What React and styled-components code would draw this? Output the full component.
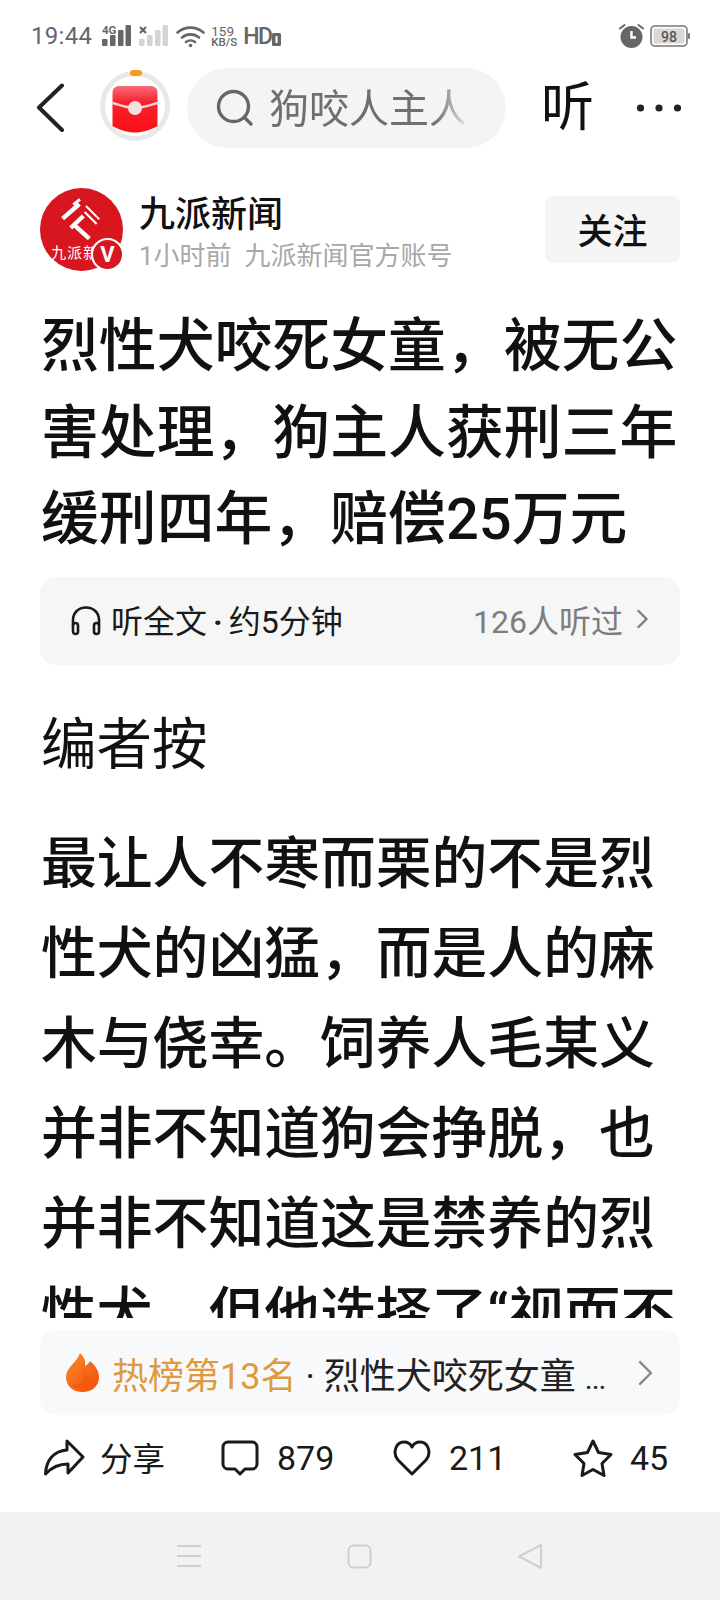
import React from "react";
import styled, { createGlobalStyle } from "styled-components";

const Global = createGlobalStyle`
  html, body { margin: 0; padding: 0; background: #fff; }
  * { box-sizing: border-box; }
  body { font-family: Roboto, "Noto Sans CJK SC", sans-serif; }
`;
const Screen = styled.div`
  width: 720px; height: 1600px; display: flex; flex-direction: column; overflow: hidden; background: #fff;
  font-family: Roboto, "Noto Sans CJK SC", sans-serif; color: #111;
`;
const StatusBar = styled.div`
  height: 68px; flex: none; display: flex; align-items: center; padding: 4px 30px 0 31px; color: #666; gap: 7px;
`;
const Clock = styled.span`font-size: 24px; letter-spacing: .3px; margin-right: 3px; color: #666;`;
const Speed = styled.span`
  display: flex; flex-direction: column; margin-left: -1px; width: 27px; font-weight: 500; white-space: nowrap;
`;
const SpeedValue = styled.span`font-size: 13.5px; line-height: 12px; font-weight: 400;`;
const SpeedUnit = styled.span`font-size: 11.5px; line-height: 11px;`;
const HD = styled.span`font-size: 23px; font-weight: 500; margin-left: -2px; letter-spacing: -1.5px;`;
const Spacer = styled.div`flex: 1;`;
const Toolbar = styled.div`
  height: 80px; flex: none; display: flex; align-items: center; padding-left: 36px;
`;
const PacketSlot = styled.div`margin-left: 33px; margin-top: -6px; flex: none; height: 72px;`;
const Pill = styled.div`
  width: 319px; height: 80px; margin-left: 16px; border-radius: 40px; background: #f3f4f6; display: flex; align-items: center; padding-left: 28px; gap: 14px;
`;
const PillText = styled.span`
  font-size: 40px; color: #6f6f6f; width: 195px; white-space: nowrap; overflow: hidden; margin-top: -5px;
  -webkit-mask-image: linear-gradient(90deg, #000 85%, rgba(0,0,0,.2));
  mask-image: linear-gradient(90deg, #000 85%, rgba(0,0,0,.2));
`;
const Listen = styled.span`font-size: 53px; color: #111; margin-left: 35px; line-height: 1;`;
const Author = styled.div`
  flex: none; display: flex; align-items: center; padding: 46px 40px 0; height: 124px;
`;
const Avatar = styled.div`
  width: 83px; height: 83px; position: relative; flex: none; border-radius: 50%; background: #d8161f; margin-top: -8px;
`;
const AvatarLabel = styled.span`
  position: absolute; left: 11px; top: 52px; width: 56px; overflow: hidden; white-space: nowrap; color: #fff; font-size: 15px; letter-spacing: 1px; line-height: 24px; font-family: "Noto Sans CJK SC", sans-serif;
`;
const Badge = styled.span`
  position: absolute; right: -1px; bottom: 0; width: 33px; height: 33px; border-radius: 50%; background: #d8161f; border: 2px solid #fff; color: #fff;
  display: flex; align-items: center; justify-content: center; font-size: 22px; font-weight: 700; font-family: Roboto, sans-serif;
`;
const AuthorInfo = styled.div`flex: 1; margin-left: 16px; display: flex; flex-direction: column; margin-top: -1px;`;
const AuthorName = styled.div`font-size: 36px; font-weight: 500; line-height: 46px; color: #111;`;
const AuthorMeta = styled.div`font-size: 26px; color: #a8a8a8; line-height: 36px; white-space: pre;`;
const Follow = styled.div`
  width: 135px; height: 67px; border-radius: 8px; background: #f5f5f5; font-size: 35px; font-weight: 500; display: flex; align-items: center; justify-content: center; margin-top: -8px; color: #111;
  padding-bottom: 2px;
`;
const Title = styled.h1`
  margin: 31px 0 0; padding: 0 36px 0 41px; flex: none; font-size: 57.85px; line-height: 86.5px; font-weight: 500; color: #111;
`;
const ListenBar = styled.div`
  flex: none; margin: 14px 40px 0; height: 88px; border-radius: 16px; background: #f6f6f6; display: flex; align-items: center; padding: 0 32px 3px 30px; gap: 9px;
  font-size: 32px; color: #1a1a1a;
`;
const ListenDot = styled.span`font-weight: 700; margin: 0 6px;`;
const ListenCount = styled.span`margin-left: auto; color: #7d7d7d; display: flex; align-items: center; gap: 14px;`;
const Article = styled.div`
  flex: 1; min-height: 0; overflow: hidden; padding: 41px 38px 0 41px;
`;
const Heading = styled.div`font-size: 55.5px; line-height: 80px; color: #111;`;
const Body = styled.p`
  margin: 33px 0 0; font-size: 55.8px; line-height: 90px; font-weight: 500; color: #111; width: 640px;
`;
const HotBar = styled.div`
  flex: none; margin: 12px 40px 0; height: 85px; border-radius: 16px; background: #f8f9fb; display: flex; align-items: center; padding: 0 27px 0 26px;
  font-size: 36px; white-space: nowrap;
`;
const HotRank = styled.span`color: #dd9a3f; margin-left: 13px;`;
const HotText = styled.span`flex: 1; color: #222; margin-left: 9px;`;
const HotEllipsis = styled.span`font-size: 30px; letter-spacing: -1px;`;
const Actions = styled.div`
  flex: none; height: 97px; display: flex; align-items: center; padding: 0 0 12px 43px; font-size: 34px; color: #1a1a1a;
`;
const Action = styled.div`
  display: flex; align-items: center; gap: ${p => p.$gap}px; width: ${p => p.$w}px;
`;
const ShareLabel = styled.span`font-size: 32.5px; margin-top: -3px;`;
const NavBar = styled.div`
  flex: none; height: 88px; background: #f1f2f4; display: flex; align-items: center; justify-content: space-between; padding: 0 177px 0 176px;
`;

const Back = () => (
  <svg width="30" height="50" viewBox="0 0 30 50"><path d="M26 2.5 3 24.5 26 47" fill="none" stroke="#222" strokeWidth="4" strokeLinecap="round" strokeLinejoin="round" /></svg>
);
const Packet = () => (
  <svg width="72" height="72" viewBox="0 0 72 72" style={{ flex: "none" }}>
    <defs>
      <linearGradient id="pk" x1="0" y1="0" x2="0" y2="1"><stop offset="0" stopColor="#fa6b78" /><stop offset=".35" stopColor="#f5222f" /><stop offset="1" stopColor="#fb0f12" /></linearGradient>
    </defs>
    <circle cx="36" cy="37" r="32.5" fill="#fff" stroke="#e8e8e8" strokeWidth="5" />
    <rect x="31" y="1" width="12" height="6" rx="3" fill="#f59a23" />
    <path d="M13.500 24c0-5 3-7 7-7h31c4 0 7 2 7 7v33c-7 4-15 6.500-22.500 6.500S20.500 61 13.500 57z" fill="url(#pk)" />
    <path d="M13.500 34c7 2 14 5 22.500 5s15.500-3 22.500-5" fill="none" stroke="#fbd3d3" strokeWidth="2.4" />
    <circle cx="36" cy="39" r="7" fill="#f6dfe0" />
  </svg>
);
const Search = () => (
  <svg width="40" height="40" viewBox="0 0 40 40" style={{ flex: "none" }}><circle cx="18.5" cy="18.5" r="15" fill="none" stroke="#666" strokeWidth="3.4" /><path d="M29.5 29.5 36 36" stroke="#666" strokeWidth="3.4" strokeLinecap="round" /></svg>
);
const Dots = () => (
  <svg width="46" height="10" viewBox="0 0 46 10" style={{ marginLeft: 42 }}><circle cx="4.5" cy="5" r="3.6" fill="#222" /><circle cx="23" cy="5" r="3.6" fill="#222" /><circle cx="41.5" cy="5" r="3.6" fill="#222" /></svg>
);
const Signal = ({ dim, mark }) => (
  <svg width="30" height="24" viewBox="0 0 30 24" fill={dim ? "#d4d4d4" : "#666"}>
    <rect x="0" y="15" width="5.500" height="7" rx="1" /><rect x="8" y="11" width="5.500" height="11" rx="1" /><rect x="16" y="6" width="5.500" height="16" rx="1" /><rect x="23.500" y="1" width="5.500" height="21" rx="1" />
    {mark === "x" && <path d="M1 3 7 9M7 3 1 9" stroke="#666" strokeWidth="2.2" />}
    {mark === "4g" && <text x="0" y="10" fontSize="11.5" fontWeight="700" fill="#666" fontFamily="Roboto">4G</text>}
  </svg>
);
const Wifi = () => (
  <svg width="29" height="23" viewBox="0 0 29 23" fill="none" stroke="#666" strokeWidth="2.6" strokeLinecap="round">
    <path d="M1.5 7.5C9 1 20 1 27.5 7.5" /><path d="M6 12.5c5-4.2 12-4.2 17 0" /><path d="M10 17c2.6-2 6.4-2 9 0" /><circle cx="14.5" cy="20.500" r="1.800" fill="#666" stroke="none" />
  </svg>
);
const Sim = () => (
  <svg width="9" height="13" viewBox="0 0 9 13" style={{ marginLeft: -7, marginTop: 6 }}><rect width="9" height="13" rx="1.500" fill="#666" /><rect x="3.500" y="3" width="2" height="7" fill="#fff" /></svg>
);
const Alarm = () => (
  <svg width="25" height="26" viewBox="0 0 25 26" style={{ marginRight: -1 }}>
    <circle cx="12.5" cy="14" r="11" fill="#666" /><path d="M12.5 8v6.5H17" fill="none" stroke="#fff" strokeWidth="2.4" />
    <path d="M1 5.5 5.5 2M24 5.5 19.5 2" stroke="#666" strokeWidth="2" strokeLinecap="round" />
  </svg>
);
const Battery = () => (
  <svg width="40" height="22" viewBox="0 0 40 22">
    <rect x="1" y="1" width="36" height="20" rx="4" fill="none" stroke="#777" strokeWidth="1.6" />
    <rect x="3.5" y="3.5" width="31" height="15" rx="2" fill="#d8d8d8" />
    <rect x="38" y="8" width="2" height="6" rx="1" fill="#777" />
    <text x="19" y="16.5" fontSize="14" textAnchor="middle" fontWeight="500" fill="#555" fontFamily="Roboto">98</text>
  </svg>
);
const Logo = styled.svg`position: absolute; left: -4px; top: -4px;`;
const AvatarLogo = () => (
  <Logo width="90" height="90" viewBox="0 0 270 270" fill="none" stroke="#fff" strokeLinecap="butt">
    <path d="M80 104 130 60" strokeWidth="13" />
    <path d="M112 62 132 46" strokeWidth="9" />
    <path d="M104 132 142 96" strokeWidth="13" />
    <path d="M150 66 190 106" strokeWidth="6" />
    <path d="M146 84 182 120" strokeWidth="6" />
    <path d="M116 124 160 164" strokeWidth="13" />
  </Logo>
);
const Headphones = () => (
  <svg width="32" height="32" viewBox="0 0 32 32" fill="none" stroke="#1a1a1a" strokeWidth="2.6" strokeLinecap="round" style={{ flex: "none", marginTop: 3 }}>
    <path d="M3 20v-5C3 7.5 8.5 2.5 16 2.5S29 7.5 29 15v5" />
    <rect x="3" y="18" width="5" height="11" rx="2.5" /><rect x="24" y="18" width="5" height="11" rx="2.5" />
  </svg>
);
const Chev = ({ w = 11, h = 20, c = "#7d7d7d", sw = 2.4 }) => (
  <svg width={w} height={h} viewBox="0 0 11 20"><path d="M1.5 2 9.5 10 1.5 18" fill="none" stroke={c} strokeWidth={sw} strokeLinecap="round" strokeLinejoin="round" /></svg>
);
const Flame = () => (
  <svg width="33" height="39" viewBox="0 0 33 39" style={{ flex: "none" }}>
    <defs><linearGradient id="fl" x1="0" y1="0" x2="1" y2="1"><stop offset="0" stopColor="#fb8a2e" /><stop offset="1" stopColor="#f34d05" /></linearGradient></defs>
    <path d="M14 0c4 4 6 8 5 13 2-1 4-3 5-5 5 4 9 10 9 16 0 9-7 15-16.500 15S0 33 0 24C0 14 11 10 14 0z" fill="url(#fl)" />
    <path d="M18 19c1 4 6 5 6 11 0 4-3 7-8 7-4 0-8-2-10-6 5 2 12 0 12-12z" fill="#f25a10" />
  </svg>
);
const Share = () => (
  <svg width="42" height="38" viewBox="0 0 42 38" fill="none" stroke="#1a1a1a" strokeWidth="3" strokeLinejoin="round" strokeLinecap="round" style={{ flex: "none" }}>
    <path d="M24 2 40 18 25 34V25C14 25 8 29 2.500 35 3 22 10 12 24 11z" />
  </svg>
);
const Comment = () => (
  <svg width="38" height="36" viewBox="0 0 38 36" fill="none" stroke="#1a1a1a" strokeWidth="3" strokeLinejoin="round" style={{ flex: "none" }}>
    <path d="M7 2h24a5 5 0 0 1 5 5v17a5 5 0 0 1-5 5h-7l-5 5-5-5H7a5 5 0 0 1-5-5V7a5 5 0 0 1 5-5z" />
  </svg>
);
const Heart = () => (
  <svg width="38" height="36" viewBox="0 0 38 36" fill="none" stroke="#1a1a1a" strokeWidth="3" strokeLinejoin="round" style={{ flex: "none" }}>
    <path d="M19 34 5 20C-1 13 3 2 11 2c4 0 6.500 2 8 5 1.500-3 4-5 8-5 8 0 12 11 6 18z" />
  </svg>
);
const Star = () => (
  <svg width="40" height="38" viewBox="0 0 40 38" fill="none" stroke="#1a1a1a" strokeWidth="3" strokeLinejoin="round" style={{ flex: "none" }}>
    <path d="M20 2 25.500 13.500 38 15.500 29 24.500 31 36.500 20 30.500 9 36.500 11 24.500 2 15.500 14.500 13.500z" />
  </svg>
);
const NavMenu = () => (
  <svg width="26" height="24" viewBox="0 0 26 24" fill="none" stroke="#cfcfcf" strokeWidth="2"><path d="M1 2h24M1 12h24M1 22h24" /></svg>
);
const NavHome = () => (
  <svg width="25" height="25" viewBox="0 0 25 25" fill="none" stroke="#cfcfcf" strokeWidth="2"><rect x="1.500" y="1.500" width="22" height="22" rx="5" /></svg>
);
const NavBack = () => (
  <svg width="26" height="27" viewBox="0 0 26 27" fill="none" stroke="#cfcfcf" strokeWidth="2" strokeLinejoin="round"><path d="M24 2 2 13.500 24 25z" /></svg>
);

export default function App() {
  return (
    <Screen>
      <Global />
      <StatusBar>
        <Clock>19:44</Clock>
        <Signal mark="4g" />
        <Signal dim mark="x" />
        <Wifi />
        <Speed><SpeedValue>159</SpeedValue><SpeedUnit>KB/S</SpeedUnit></Speed>
        <HD>HD</HD>
        <Sim />
        <Spacer />
        <Alarm />
        <Battery />
      </StatusBar>
      <Toolbar>
        <Back />
        <PacketSlot><Packet /></PacketSlot>
        <Pill><Search /><PillText>狗咬人主人</PillText></Pill>
        <Listen>听</Listen>
        <Dots />
      </Toolbar>
      <Author>
        <Avatar>
          <AvatarLogo />
          <AvatarLabel>九派新闻</AvatarLabel>
          <Badge>V</Badge>
        </Avatar>
        <AuthorInfo>
          <AuthorName>九派新闻</AuthorName>
          <AuthorMeta>1小时前  九派新闻官方账号</AuthorMeta>
        </AuthorInfo>
        <Follow>关注</Follow>
      </Author>
      <Title>烈性犬咬死女童，被无公害处理，狗主人获刑三年缓刑四年，赔偿25万元</Title>
      <ListenBar>
        <Headphones />
        <span>听全文<ListenDot>·</ListenDot>约5分钟</span>
        <ListenCount>126人听过<Chev /></ListenCount>
      </ListenBar>
      <Article>
        <Heading>编者按</Heading>
        <Body>最让人不寒而栗的不是烈性犬的凶猛，而是人的麻木与侥幸。饲养人毛某义并非不知道狗会挣脱，也并非不知道这是禁养的烈性犬，但他选择了“视而不见”。</Body>
      </Article>
      <HotBar>
        <Flame />
        <HotRank>热榜第13名</HotRank>
        <HotText>· 烈性犬咬死女童 <HotEllipsis>...</HotEllipsis></HotText>
        <Chev w={15} h={28} c="#888" sw={1.8} />
      </HotBar>
      <Actions>
        <Action $w={178} $gap={15}><Share /><ShareLabel>分享</ShareLabel></Action>
        <Action $w={172} $gap={18}><Comment />879</Action>
        <Action $w={180} $gap={18}><Heart />211</Action>
        <Action $w={110} $gap={17}><Star />45</Action>
      </Actions>
      <NavBar><NavMenu /><NavHome /><NavBack /></NavBar>
    </Screen>
  );
}
